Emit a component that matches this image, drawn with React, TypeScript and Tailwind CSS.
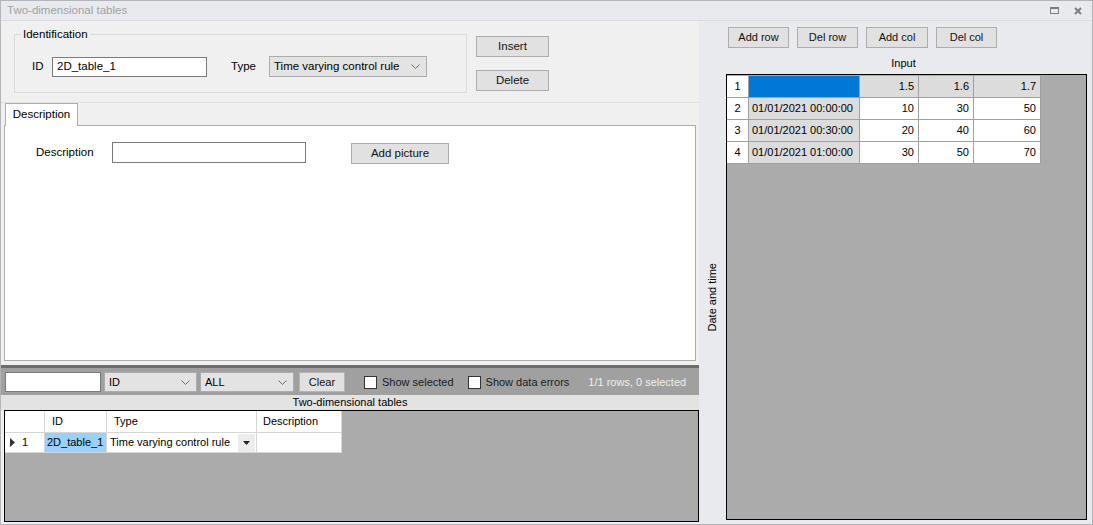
import React from "react";

function Chevron() {
  return (
    <svg width="9" height="5" viewBox="0 0 9 5" className="shrink-0">
      <path d="M0.5 0.5L4.5 4.5L8.5 0.5" fill="none" stroke="#6f6f6f" strokeWidth="1" />
    </svg>
  );
}

function Select({ value, className }: { value: string; className: string }) {
  return (
    <div
      className={`flex items-center justify-between border border-[#acacac] bg-[#e3e3e3] pl-[4px] pr-[6px] ${className}`}
    >
      <span className="leading-none">{value}</span>
      <Chevron />
    </div>
  );
}

function Btn({ label, className }: { label: string; className: string }) {
  return (
    <button
      type="button"
      className={`flex items-center justify-center border border-[#adadad] bg-[#e1e1e1] leading-none text-[#111] ${className}`}
    >
      {label}
    </button>
  );
}

function Check({ label }: { label: string }) {
  return (
    <div className="flex items-center">
      <div className="h-[13px] w-[13px] border border-[#333] bg-white" />
      <span className="ml-[5px] text-[#1b1b1b]">{label}</span>
    </div>
  );
}

const inputRows = [
  { n: "1", date: "", values: ["1.5", "1.6", "1.7"], head: true },
  { n: "2", date: "01/01/2021 00:00:00", values: ["10", "30", "50"], head: false },
  { n: "3", date: "01/01/2021 00:30:00", values: ["20", "40", "60"], head: false },
  { n: "4", date: "01/01/2021 01:00:00", values: ["30", "50", "70"], head: false },
];

const valueWidths = ["w-[59px]", "w-[55px]", "w-[67px]"];

export default function App() {
  return (
    <div className="flex h-[525px] w-[1093px] flex-col border border-[#b3b5ba] bg-[#f0f0f0] font-['Liberation_Sans',Arial,sans-serif] text-[11px] text-black">
      {/* title bar */}
      <div className="flex h-[20px] shrink-0 items-center justify-between border-b border-[#dcdde0] bg-[#e9eaed] pl-[6px] pr-[10px]">
        <span className="text-[11.5px] text-[#a2a2a2]">Two-dimensional tables</span>
        <div className="flex items-center gap-[15px]">
          <div className="h-[7px] w-[9px] border border-t-2 border-[#7d7d7d]" />
          <svg width="8" height="8" viewBox="0 0 8 8">
            <path d="M1 1L7 7M7 1L1 7" stroke="#7d7d7d" strokeWidth="2" />
          </svg>
        </div>
      </div>

      <div className="flex min-h-0 flex-1">
        {/* left side */}
        <div className="flex w-[698px] shrink-0 flex-col">
          <div className="flex h-[82px] shrink-0 items-start border-b border-[#e2e2e2]">
            <div className="relative ml-[13px] mt-[13px] h-[59px] w-[453px] border border-[#dcdcdc]">
              <span className="absolute -top-[8px] left-[6px] bg-[#f0f0f0] px-[2px] text-[11.5px] leading-[14px]">
                Identification
              </span>
              <div className="mt-[21px] flex items-center pl-[17px]">
                <span className="w-[20px] text-[11.5px]">ID</span>
                <div className="flex h-[20px] w-[155px] items-center border border-[#7a7a7a] bg-white pl-[4px] text-[11.5px]">
                  2D_table_1
                </div>
                <span className="ml-[24px] w-[38px] text-[11.5px]">Type</span>
                <Select value="Time varying control rule" className="h-[21px] w-[158px] text-[11.5px]" />
              </div>
            </div>
            <div className="ml-[9px] mt-[15px] flex flex-col gap-[13px]">
              <Btn label="Insert" className="h-[21px] w-[73px] text-[11.5px]" />
              <Btn label="Delete" className="h-[21px] w-[73px] text-[11.5px]" />
            </div>
          </div>

          {/* description tab */}
          <div className="flex h-[22px] shrink-0 items-end pl-[4px]">
            <div className="relative z-10 -mb-px flex h-[23px] w-[73px] items-center justify-center border border-b-0 border-[#adadad] bg-white text-[11.5px]">
              Description
            </div>
          </div>
          <div className="ml-[3px] h-[236px] w-[692px] shrink-0 border border-[#adadad] bg-white">
            <div className="mt-[15px] flex items-center pl-[31px]">
              <span className="w-[76px] text-[11.5px]">Description</span>
              <div className="h-[21px] w-[194px] border border-[#7a7a7a] bg-white" />
              <Btn label="Add picture" className="ml-[45px] mt-[2px] h-[21px] w-[98px] text-[11.5px]" />
            </div>
          </div>

          <div className="h-[4px] shrink-0" />
          <div className="h-[3px] shrink-0 bg-[#6d6d6d]" />

          {/* filter bar */}
          <div className="flex h-[27px] shrink-0 items-center bg-[#a0a0a0] pl-[4px] pt-[1px]">
            <div className="h-[20px] w-[96px] border border-[#7a7a7a] bg-white" />
            <Select value="ID" className="ml-[3px] h-[20px] w-[93px]" />
            <Select value="ALL" className="ml-[3px] h-[20px] w-[94px]" />
            <Btn label="Clear" className="ml-[5px] h-[20px] w-[46px] border-[#b5b5b5]" />
            <div className="ml-[19px]">
              <Check label="Show selected" />
            </div>
            <div className="ml-[14px]">
              <Check label="Show data errors" />
            </div>
            <span className="ml-[19px] text-[#eeeeee]">1/1 rows, 0 selected</span>
          </div>

          <div className="flex h-[15px] shrink-0 items-center justify-center bg-[#e3e3e3] leading-none">
            Two-dimensional tables
          </div>

          {/* records grid */}
          <div className="mb-[2px] ml-[3px] min-h-0 w-[695px] flex-1 border border-black bg-[#ababab]">
            <div className="flex h-[22px] w-fit bg-white">
              <div className="w-[40px] border-b border-r border-[#d6d6d6]" />
              <div className="flex w-[62px] items-center border-b border-r border-[#d6d6d6] pl-[7px]">ID</div>
              <div className="flex w-[150px] items-center border-b border-r border-[#d6d6d6] pl-[7px]">Type</div>
              <div className="flex w-[85px] items-center border-b border-r border-[#d6d6d6] pl-[6px]">Description</div>
            </div>
            <div className="flex h-[20px] w-fit bg-white">
              <div className="flex w-[40px] items-center border-b border-r border-[#d6d6d6] pl-[5px]">
                <svg width="5" height="9" viewBox="0 0 5 9">
                  <path d="M0 0L5 4.5L0 9Z" fill="#333" />
                </svg>
                <span className="ml-[7px]">1</span>
              </div>
              <div className="flex w-[62px] items-center border-b border-r border-[#d6d6d6] bg-[#99d1fa] pl-[2px]">
                2D_table_1
              </div>
              <div className="flex w-[150px] items-center justify-between border-b border-r border-[#d6d6d6] pl-[3px] pr-[1px]">
                <span>Time varying control rule</span>
                <div className="flex h-[18px] w-[17px] items-center justify-center bg-[#ececec]">
                  <svg width="7" height="4" viewBox="0 0 7 4">
                    <path d="M0 0H7L3.5 4Z" fill="#222" />
                  </svg>
                </div>
              </div>
              <div className="w-[85px] border-b border-r border-[#d6d6d6]" />
            </div>
          </div>
        </div>

        {/* right side */}
        <div className="flex min-w-0 flex-1 flex-col bg-[#e9eaee]">
          <div className="flex shrink-0 gap-[8px] pl-[29px] pt-[6px]">
            <Btn label="Add row" className="h-[21px] w-[61px]" />
            <Btn label="Del row" className="h-[21px] w-[61px]" />
            <Btn label="Add col" className="h-[21px] w-[62px]" />
            <Btn label="Del col" className="h-[21px] w-[61px]" />
          </div>
          <div className="flex h-[26px] shrink-0 justify-center pl-[16px] pt-[9px] leading-[13px]">Input</div>
          <div className="mb-[4px] flex min-h-0 flex-1">
            <div className="flex w-[27px] shrink-0 items-center justify-center">
              <span className="-rotate-90 whitespace-nowrap">Date and time</span>
            </div>
            <div className="mr-[5px] flex-1 border border-black bg-[#ababab] pt-px">
              {inputRows.map((r) => (
                <div key={r.n} className="flex h-[22px] w-fit">
                  <div className="flex w-[22px] items-center justify-center border-b border-r border-[#a0a0a0] bg-white">
                    {r.n}
                  </div>
                  <div
                    className={`flex w-[111px] items-center border-b border-r border-[#a0a0a0] pl-[3px] ${
                      r.head ? "bg-[#0078d7]" : "bg-[#dcdcdc]"
                    }`}
                  >
                    {r.date}
                  </div>
                  {r.values.map((v, i) => (
                    <div
                      key={i}
                      className={`flex items-center justify-end border-b border-r border-[#a0a0a0] pr-[4px] ${valueWidths[i]} ${
                        r.head ? "bg-[#dcdcdc]" : "bg-white"
                      }`}
                    >
                      {v}
                    </div>
                  ))}
                </div>
              ))}
            </div>
          </div>
        </div>
      </div>
    </div>
  );
}
